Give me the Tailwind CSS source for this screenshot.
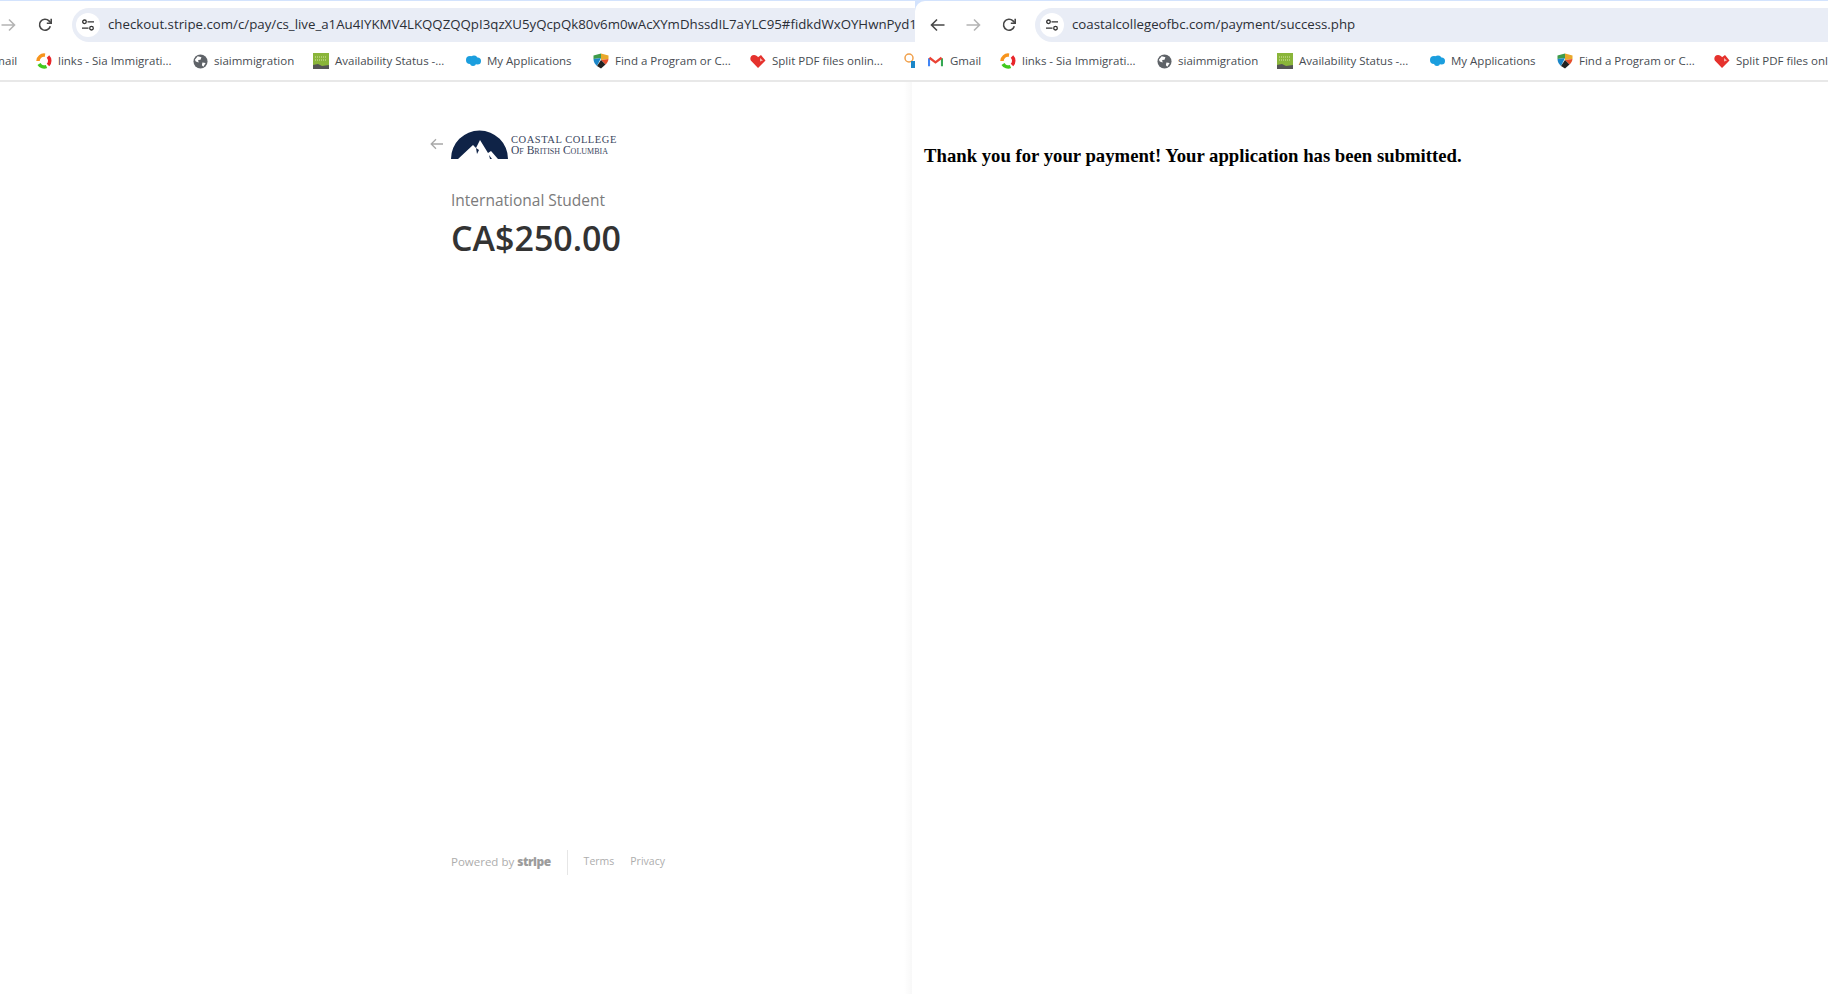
<!DOCTYPE html>
<html lang="en">

<head>
    <meta charset="UTF-8">
    <meta name="viewport" content="width=device-width, initial-scale=1.0">
    <title>Payment</title>
    <script src="https://cdn.jsdelivr.net/npm/@tailwindcss/browser@4"></script>
</head>

<body class="bg-white font-['Open_Sans',sans-serif] overflow-hidden">
    <div class="flex flex-col w-[1828px] h-[994px]">

        <!-- two browser toolbars side by side -->
        <div class="flex h-[82px] bg-[#d3e3fd] pt-[1px] shrink-0">
            <div class="w-[915px] bg-white overflow-hidden border-b-2 border-[#e8e8e8] flex flex-col">
                <div class="flex items-center h-[46px] pt-[1px] shrink-0">
                    <svg class="w-4 h-4 mr-[21px] shrink-0 text-[#b4b4b4]" viewBox="0 0 16 16" fill="none" stroke="currentColor" stroke-width="1.6"><path d="M1.5 8h13M9 2.5 14.5 8 9 13.5" /></svg>
                    <svg class="w-4 h-4 mr-[18px] shrink-0 text-[#474747]" viewBox="0 0 16 16" fill="none" stroke="currentColor" stroke-width="1.6"><path d="M13.3 9.2A5.5 5.5 0 1 1 12 3.9L14 6" /><path d="M14.2 1.8V6.2H9.8" /></svg>
                    <div class="flex items-center flex-1 min-w-0 h-[34px] bg-[#e9edf6] rounded-l-[17px] pl-1 ml-[1px] overflow-hidden">
                        <span class="flex items-center justify-center w-6 h-6 rounded-full bg-white shrink-0">
                            <svg class="w-[14px] h-[14px] text-[#333]" viewBox="0 0 14 14" fill="none" stroke="currentColor" stroke-width="1.3"><circle cx="3.5" cy="3.8" r="1.8" /><path d="M6.5 3.8H13M1 10.2h6.5" /><circle cx="10.5" cy="10.2" r="1.8" /></svg>
                        </span>
                        <span class="ml-[8px] text-[13.27px] leading-none text-[#2b2f36] whitespace-nowrap">checkout.stripe.com/c/pay/cs_live_a1Au4IYKMV4LKQQZQQpI3qzXU5yQcpQk80v6m0wAcXYmDhssdIL7aYLC95#fidkdWxOYHwnPyd1</span>
                    </div>
                </div>
                <div data-bookmarks class="ml-[-36px]"></div>
            </div>

            <div class="flex-1 bg-white overflow-hidden rounded-tl-[10px] border-b-2 border-[#e8e8e8] flex flex-col">
                <div class="flex items-center h-[46px] pt-[1px] shrink-0">
                    <svg class="w-4 h-4 ml-[15px] mr-[19px] shrink-0 text-[#474747]" viewBox="0 0 16 16" fill="none" stroke="currentColor" stroke-width="1.6"><path d="M14.5 8h-13M7 2.5 1.5 8 7 13.5" /></svg>
                    <svg class="w-4 h-4 mr-[20px] shrink-0 text-[#b4b4b4]" viewBox="0 0 16 16" fill="none" stroke="currentColor" stroke-width="1.6"><path d="M1.5 8h13M9 2.5 14.5 8 9 13.5" /></svg>
                    <svg class="w-4 h-4 mr-[18px] shrink-0 text-[#474747]" viewBox="0 0 16 16" fill="none" stroke="currentColor" stroke-width="1.6"><path d="M13.3 9.2A5.5 5.5 0 1 1 12 3.9L14 6" /><path d="M14.2 1.8V6.2H9.8" /></svg>
                    <div class="flex items-center flex-1 min-w-0 h-[34px] bg-[#e9edf6] rounded-l-[17px] pl-[5px] overflow-hidden">
                        <span class="flex items-center justify-center w-6 h-6 rounded-full bg-white shrink-0">
                            <svg class="w-[14px] h-[14px] text-[#333]" viewBox="0 0 14 14" fill="none" stroke="currentColor" stroke-width="1.3"><circle cx="3.5" cy="3.8" r="1.8" /><path d="M6.5 3.8H13M1 10.2h6.5" /><circle cx="10.5" cy="10.2" r="1.8" /></svg>
                        </span>
                        <span class="ml-[8px] text-[13.27px] leading-none text-[#2b2f36] whitespace-nowrap">coastalcollegeofbc.com/payment/success.php</span>
                    </div>
                </div>
                <div data-bookmarks class="ml-[13px]"></div>
            </div>
        </div>

        <!-- page content of both windows -->
        <div class="flex flex-1 min-h-0">
            <div class="flex w-[912px] shrink-0">
                <div class="flex-1 flex flex-col pl-[430px] pt-[47px]">
                    <div class="flex items-center h-[30px]">
                        <svg class="w-[14px] h-[14px] mr-[7px] text-[#a8a8a8]" viewBox="0 0 14 14" fill="none" stroke="currentColor" stroke-width="1.3"><path d="M13 7H1.2M6 2.2 1.2 7 6 11.8" /></svg>
                        <svg class="w-[57px] h-[29px] shrink-0" viewBox="0 0 57 29">
                            <path fill="#0f2347" d="M0 29A28.5 28.5 0 0 1 57 29H47L40 21 37 23 29 10 25 18 22 15 7 29Z" />
                            <path fill="#0f2347" d="M25 18l1 6 2-4ZM38 25l3 4h-2Z" />
                        </svg>
                        <div class="flex flex-col ml-[3px] pt-[2px] font-['Liberation_Serif',serif] text-[#3a4660] whitespace-nowrap">
                            <span class="text-[10.5px] leading-[11px] tracking-[0.55px]">COASTAL COLLEGE</span>
                            <span class="text-[11.5px] leading-[11px] [font-variant-caps:small-caps]">Of British Columbia</span>
                        </div>
                    </div>
                    <div class="ml-[21px] mt-[31px] text-[15.5px] leading-5 font-normal text-[#7b7b7b]">International Student</div>
                    <div class="ml-[21px] mt-[6px] text-[34px] leading-[44px] font-semibold text-[#333333]">CA$250.00</div>
                    <div class="flex items-center ml-[21px] mt-[589px] h-[26px] text-[11.5px] text-[#adadad]">
                        <span>Powered by</span>
                        <span class="ml-[3px] text-[12px] font-extrabold tracking-[-0.5px] text-[#9c9c9c]">stripe</span>
                        <span class="mx-4 w-[1px] h-[25px] bg-[#e6e6e6]"></span>
                        <span class="text-[10.5px]">Terms</span>
                        <span class="ml-4 text-[10.5px]">Privacy</span>
                    </div>
                </div>
                <div class="w-[8px] h-full bg-gradient-to-r from-white to-[#f8f8f8]"></div>
            </div>
            <div class="flex-1 pl-3 pt-[62px]">
                <h3 class="font-['Liberation_Serif',serif] text-[18.72px] leading-6 font-bold text-black">Thank you for your payment! Your application has been submitted.</h3>
            </div>
        </div>
    </div>

    <!-- bookmark bar is the same in both windows -->
    <template id="bookmarkBar">
        <div class="flex items-center h-[28px] text-[11.5px] text-[#474c52] whitespace-nowrap">
            <div class="flex items-center gap-[7px] w-[72px] shrink-0">
                <svg class="w-[15px] h-[15px] shrink-0" viewBox="0 0 16 16" fill="none"><path d="M1 13V4.5" stroke="#4285f4" stroke-width="2.4" /><path d="M15 13V4.5" stroke="#34a853" stroke-width="2.4" /><path d="M1.5 4 8 9l6.5-5" stroke="#ea4335" stroke-width="2.4" /></svg>
                <span>Gmail</span>
            </div>
            <div class="flex items-center gap-[6px] w-[157px] shrink-0">
                <svg class="w-4 h-4 shrink-0" viewBox="0 0 16 16" fill="none" stroke-width="3.5"><path d="M2 8A6 6 0 0 1 9 2.2" stroke="#f7941d" /><path d="M12 3.5A6 6 0 0 1 12 12" stroke="#e8262a" /><path d="M10.5 13.5A6 6 0 0 1 3 11" stroke="#43c91e" /></svg>
                <span>links - Sia Immigrati...</span>
            </div>
            <div class="flex items-center gap-[6px] w-[120px] shrink-0">
                <svg class="w-[15px] h-[15px] shrink-0" viewBox="0 0 16 16"><circle cx="8" cy="8" r="7.5" fill="#5f6368" /><path fill="#fff" d="M5 2.5 9 3.5 8 6 5.5 6.5 6 9 3 8 2 6ZM10 9l3.5.5L11 13.5 9.5 12Z" /></svg>
                <span>siaimmigration</span>
            </div>
            <div class="flex items-center gap-[6px] w-[152px] shrink-0">
                <svg class="w-4 h-4 shrink-0" viewBox="0 0 16 16"><rect width="16" height="16" fill="#8ab53a" /><path d="M2 4h12M2 7h12" stroke="#d5e6a8" stroke-dasharray="1 1" /><path d="M0 16v-4l5-1 4 2 7-1v4Z" fill="#555" /></svg>
                <span>Availability Status -...</span>
            </div>
            <div class="flex items-center gap-[6px] w-[128px] shrink-0">
                <svg class="w-4 h-4 shrink-0" viewBox="0 0 16 16" fill="#1b9ede"><circle cx="5" cy="7" r="4" /><circle cx="9" cy="6" r="3.5" /><circle cx="12.5" cy="8" r="3.5" /><circle cx="8" cy="10" r="3" /></svg>
                <span>My Applications</span>
            </div>
            <div class="flex items-center gap-[6px] w-[157px] shrink-0">
                <svg class="w-4 h-4 shrink-0" viewBox="0 0 16 16"><path fill="#e9a82b" d="M8 .5 15.5 2.5V6L8 7Z" /><path fill="#3f9b4a" d="M8 .5 .5 2.5V6L8 5Z" /><path fill="#1b86c8" d="M.5 6 8 5 4 13C2 11 .5 9 .5 6Z" /><path fill="#e54e2c" d="M8 7 15.5 6C15 9 14 10 12.5 11.5Z" /><path fill="#222" d="M8 7 12.5 11.5 8 15.5 4 13Z" /></svg>
                <span>Find a Program or C...</span>
            </div>
            <div class="flex items-center gap-[6px] w-[153px] shrink-0">
                <svg class="w-4 h-4 shrink-0" viewBox="0 0 16 16"><path fill="#e5322d" d="M8 15 .8 7.5C-.5 5 1 2 4 2c2 0 3.2 1 4 2.2L11 2l4.5 5.5Z" /><path fill="#f5b5b0" d="M10 5l3 2.5-3 1Z" /></svg>
                <span>Split PDF files onlin...</span>
            </div>
            <svg class="w-4 h-4 shrink-0" viewBox="0 0 16 16"><circle cx="6" cy="5" r="4" fill="none" stroke="#f0a04b" stroke-width="1.5" /><rect x="8" y="8" width="8" height="7" fill="#1b86c8" /></svg>
        </div>
    </template>

    <script>
        const bar = document.getElementById("bookmarkBar")
        document.querySelectorAll("[data-bookmarks]").forEach(el => {
            el.appendChild(bar.content.cloneNode(true))
        })
    </script>
</body>

</html>
